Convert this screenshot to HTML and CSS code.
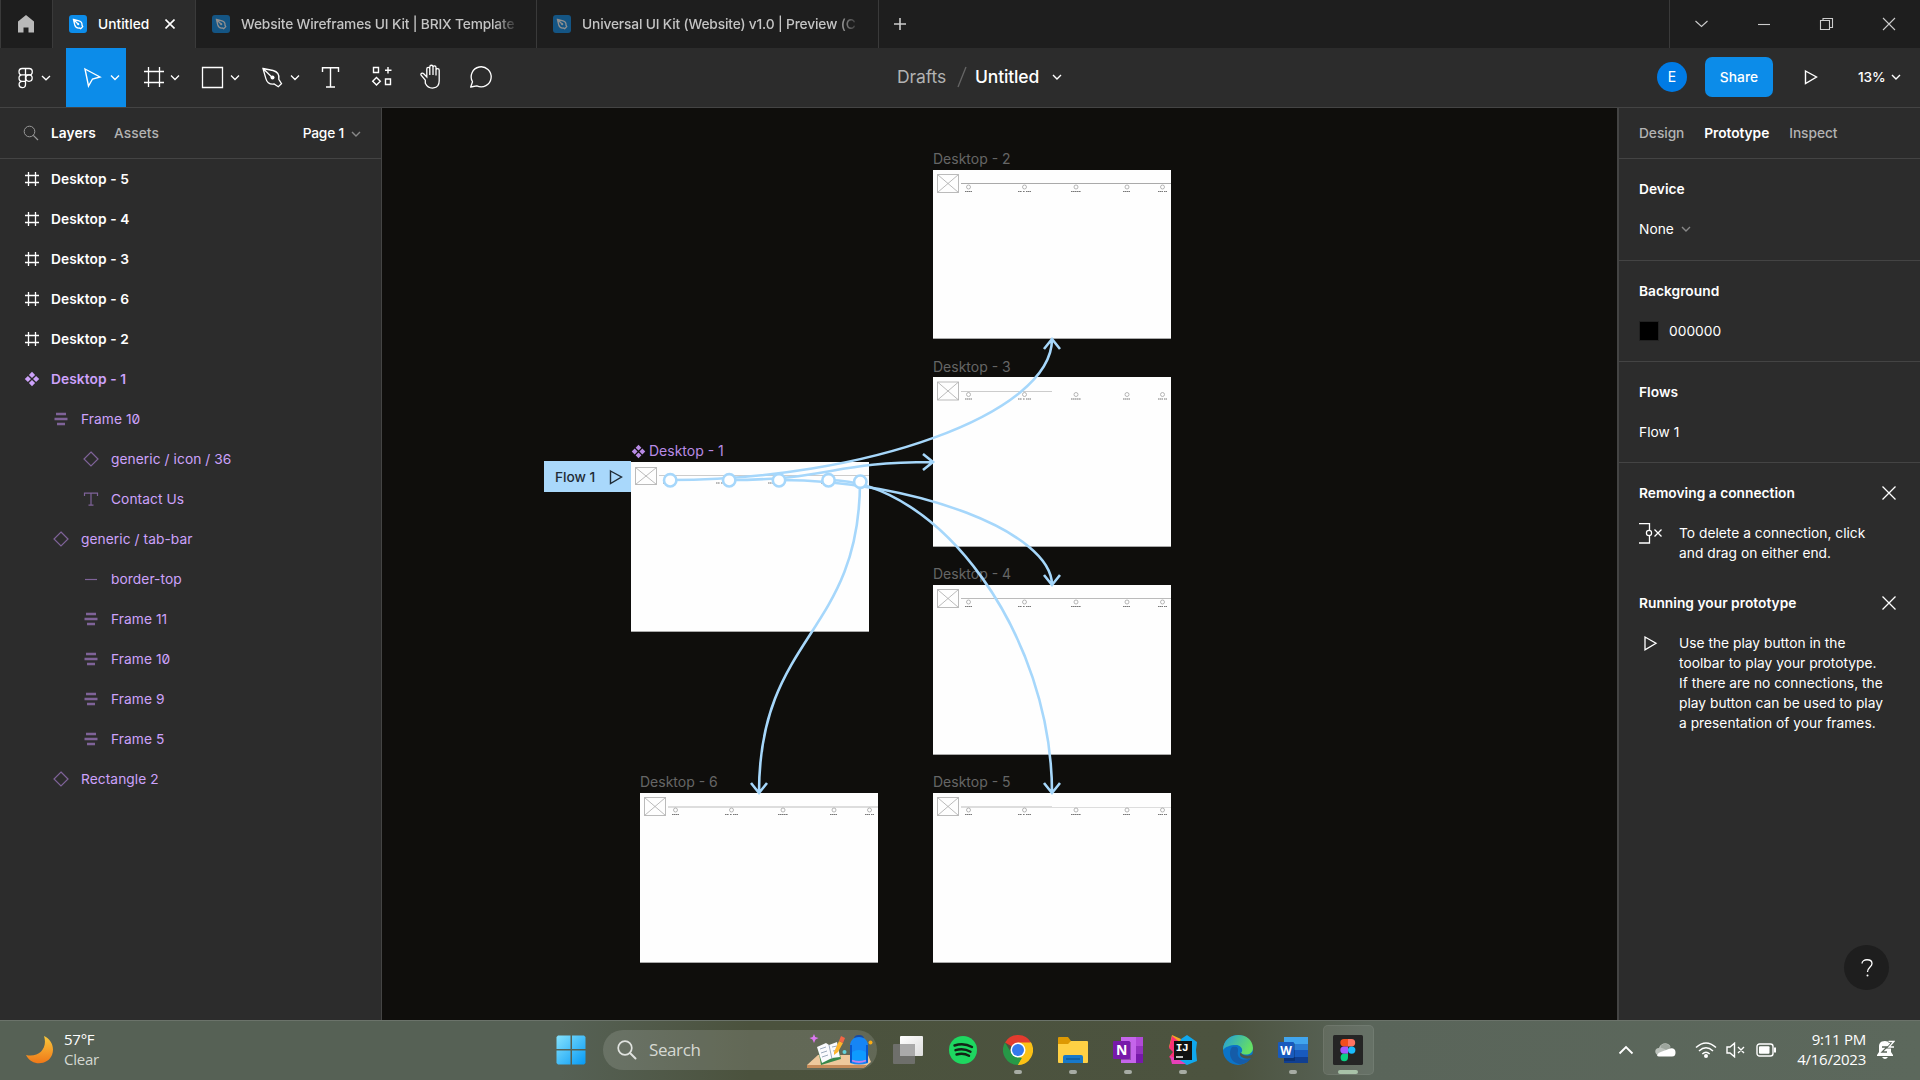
FILE: index.html
```html
<!DOCTYPE html>
<html lang="en">
<head>
<meta charset="utf-8">
<title>Untitled</title>
<link rel="stylesheet" href="styles.css">
</head>
<body>
<svg class="defs" width="0" height="0" aria-hidden="true">
  <symbol id="i-frame" viewBox="0 0 16 16"><path d="M4.500 1v14M11.500 1v14M1 4.500h14M1 11.500h14" fill="none" stroke="currentColor" stroke-width="1.300"/></symbol>
  <symbol id="i-component" viewBox="0 0 16 16"><path d="M8 .8l3.100 3.100L8 7 4.900 3.900zM8 9l3.100 3.100L8 15.200l-3.100-3.100zM3.900 4.900L7 8l-3.100 3.100L.8 8zM12.100 4.900L15.200 8l-3.100 3.100L9 8z" fill="currentColor"/></symbol>
  <symbol id="i-layout" viewBox="0 0 16 16"><path d="M3 3h10M1.500 8h13M4 13h8" fill="none" stroke="currentColor" stroke-width="2.500"/></symbol>
  <symbol id="i-instance" viewBox="0 0 16 16"><path d="M8 1l7 7-7 7-7-7z" fill="none" stroke="currentColor" stroke-width="1.200"/></symbol>
  <symbol id="i-text" viewBox="0 0 16 16"><path d="M1.500 5V2.200h13V5M8 2.200v12M5.500 14.200h5" fill="none" stroke="currentColor" stroke-width="1.200"/></symbol>
  <symbol id="i-line" viewBox="0 0 16 16"><path d="M2 8.500h12" stroke="currentColor" stroke-width="1.200"/></symbol>
  <symbol id="i-chev" viewBox="0 0 10 6"><path d="M1 1l4 4 4-4" fill="none" stroke="currentColor" stroke-width="1.400"/></symbol>
  <symbol id="i-close" viewBox="0 0 14 14"><path d="M.5 .5l13 13M13.500 .5l-13 13" fill="none" stroke="currentColor" stroke-width="1.300"/></symbol>
  <symbol id="i-close-bold" viewBox="0 0 10 10"><path d="M.5 .5l9 9M9.500 .5l-9 9" fill="none" stroke="currentColor" stroke-width="1.600"/></symbol>
  <symbol id="i-play" viewBox="0 0 14 16"><path d="M1.500 2L12.500 8 1.500 14.500z" fill="none" stroke="currentColor" stroke-width="1.400"/></symbol>
  <symbol id="i-file" viewBox="0 0 18 18"><rect width="18" height="18" rx="3" fill="#0c8ce9"/><path d="M4.500 4.500l5.500 1.300c2 .6 3.200 2.200 3 4.300l.7 1.600-2 2-1.600-.7c-2.100.2-3.700-1-4.300-3zM4.500 4.500l4.300 4.300" fill="none" stroke="#fff" stroke-width="1.300"/><circle cx="9.200" cy="9.200" r="1.100" fill="#fff"/></symbol>
  <symbol id="wire" viewBox="0 0 238 30">
    <path d="M4.500 4.500h21v18h-21zM4.500 4.500l21 18M25.500 4.500l-21 18" fill="none" stroke="#aaa" stroke-width=".8"/>
    <g fill="none" stroke="#999" stroke-width=".7"><circle cx="35.500" cy="17" r="2"/><circle cx="91.500" cy="17" r="2"/><circle cx="143" cy="17" r="2"/><circle cx="194" cy="17" r="2"/><circle cx="229.500" cy="17" r="2"/></g>
    <path d="M32 21.500h7M85 21.500h4m1 0h2m1 0h5M138 21.500h10M190 21.500h7M225 21.500h5m1 0h3" fill="none" stroke="#777" stroke-width="1" stroke-dasharray="1.600 .4"/>
  </symbol>
</svg>

<header class="tabs">
  <div class="home"><svg width="18" height="20" viewBox="0 0 18 20"><path d="M9 1l8 6.500V18.500h-5.500v-5h-5v5H1V7.500z" fill="#b9b9b9"/></svg></div>
  <div class="tab active"><svg class="file"><use href="#i-file"/></svg><span>Untitled</span><svg class="x"><use href="#i-close-bold"/></svg></div>
  <div class="tab second"><svg class="file"><use href="#i-file"/></svg><span>Website Wireframes UI Kit | BRIX Template</span></div>
  <div class="tab third"><svg class="file"><use href="#i-file"/></svg><span>Universal UI Kit (Website) v1.0 | Preview (C</span></div>
  <svg class="plus" width="12" height="12" viewBox="0 0 12 12"><path d="M6 0v12M0 6h12" stroke="#ccc" stroke-width="1.600"/></svg>
  <div class="window">
    <svg width="62" height="48" viewBox="0 0 62 48"><path d="M25.500 21l6 5.500 6-5.500"/></svg>
    <svg width="62" height="48" viewBox="0 0 62 48"><path d="M26 24.500h12"/></svg>
    <svg width="63" height="48" viewBox="0 0 63 48"><path d="M26.500 20.500h9v9h-9zM29 20.500v-2h9.500v9h-3"/></svg>
    <svg width="63" height="48" viewBox="0 0 63 48"><path d="M26 18l12 12M38 18L26 30"/></svg>
  </div>
</header>

<nav class="toolbar">
  <div class="tools">
    <svg width="66" height="59" viewBox="0 0 66 59"><g fill="none" stroke="#fff" stroke-width="1.300"><path d="M25.500 20.500h-3.300a3.200 3.200 0 000 6.400h3.300zM25.500 20.500h3.600a3.200 3.200 0 010 6.400h-3.600zM25.500 26.900h-3.300a3.200 3.200 0 000 6.400h3.300zM25.500 33.300h-3.300a3.200 3.200 0 103.300 3.200z"/><circle cx="29" cy="30.100" r="3.200"/><path d="M42 28l4 3.800 4-3.800"/></g></svg>
    <svg class="on" width="60" height="59" viewBox="0 0 60 59"><g fill="none" stroke="#fff" stroke-width="1.400"><path d="M19 21l15 8-7.500 2-4 7z"/><path d="M45 27.500l4 4 4-4"/></g></svg>
    <svg width="60" height="59" viewBox="0 0 60 59"><g fill="none" stroke="#fff" stroke-width="1.300"><path d="M22.500 19v20M33.500 19v20M18 23.500h20M18 34.500h20M45 27.500l4 4 4-4"/></g></svg>
    <svg width="60" height="59" viewBox="0 0 60 59"><g fill="none" stroke="#fff" stroke-width="1.300"><path d="M16.500 19.500h20v20h-20zM45 27.500l4 4 4-4"/></g></svg>
    <svg width="60" height="59" viewBox="0 0 60 59"><g fill="none" stroke="#fff" stroke-width="1.300"><path d="M17 20.500l10 2c4.500 1.200 6.500 4.500 5.800 8.800l2.700 4.400-3.200 3-4.200-2.700c-4.200.5-7.200-1.500-8.300-5.700zM17 20.500l9.300 9M45 27.500l4 4 4-4"/></g><circle cx="26.500" cy="29.500" r="2" fill="#fff"/></svg>
    <svg width="50" height="59" viewBox="0 0 50 59"><path d="M16.500 24v-4.300h16V24M24.500 19.700v19.300M20 39h9" fill="none" stroke="#fff" stroke-width="1.400"/></svg>
    <svg width="50" height="59" viewBox="0 0 50 59"><path d="M17.500 19.500h5v5h-5zM29.500 31h5v5.500h-5zM32 19v6.500M29 22.200h6.500M20.500 29.500l3.800 3.800-3.800 3.800-3.800-3.800z" fill="none" stroke="#fff" stroke-width="1.400"/></svg>
    <svg width="50" height="59" viewBox="0 0 50 59"><path d="M18.500 33.500l-4.200-5c-.9-1.500 1.200-2.800 2.600-1.500l3.100 3.200v-8c0-2 3-2 3 0v6-8c0-2.200 3.200-2.200 3.200 0v8-7.500c0-2 3-2 3 0v8-5.200c0-2 3.200-2 3.200 0V34c0 9-10.500 9.500-13.900 2.500z" transform="translate(.8 -1.300)" fill="none" stroke="#fff" stroke-width="1.300"/></svg>
    <svg width="50" height="59" viewBox="0 0 50 59"><path d="M14 39l1.800-5.200a10 10 0 114.300 4z" transform="translate(.7 0)" fill="none" stroke="#fff" stroke-width="1.300" stroke-linejoin="round"/></svg>
  </div>
  <div class="doc"><span class="drafts">Drafts</span><svg width="10" height="22" viewBox="0 0 10 22"><path d="M9 1L1 21" stroke="#666" stroke-width="1.300"/></svg><span class="name">Untitled</span><svg class="chev"><use href="#i-chev"/></svg></div>
  <div class="actions">
    <span class="avatar">E</span><span class="share">Share</span><svg class="play"><use href="#i-play"/></svg><span class="pct">13%</span><svg class="chev"><use href="#i-chev"/></svg>
  </div>
</nav>

<main>
  <aside class="left">
    <div class="head"><svg width="16" height="16" viewBox="0 0 16 16"><circle cx="6.500" cy="6.500" r="5.300" fill="none" stroke="#999"/><path d="M10.300 10.300l4.700 4.700" stroke="#999" stroke-width="1.200"/></svg><b>Layers</b><span class="dim">Assets</span><span class="page">Page 1</span><svg class="chev"><use href="#i-chev"/></svg></div>
    <ul>
      <li class="top"><svg><use href="#i-frame"/></svg>Desktop - 5</li>
      <li class="top"><svg><use href="#i-frame"/></svg>Desktop - 4</li>
      <li class="top"><svg><use href="#i-frame"/></svg>Desktop - 3</li>
      <li class="top"><svg><use href="#i-frame"/></svg>Desktop - 6</li>
      <li class="top"><svg><use href="#i-frame"/></svg>Desktop - 2</li>
      <li class="top comp"><svg><use href="#i-component"/></svg>Desktop - 1</li>
      <li class="sub zero"><svg><use href="#i-layout"/></svg>Frame 10</li>
      <li class="sub deep"><svg><use href="#i-instance"/></svg>generic / icon / 36</li>
      <li class="sub deep"><svg><use href="#i-text"/></svg>Contact Us</li>
      <li class="sub"><svg><use href="#i-instance"/></svg>generic / tab-bar</li>
      <li class="sub deep"><svg><use href="#i-line"/></svg>border-top</li>
      <li class="sub deep"><svg><use href="#i-layout"/></svg>Frame 11</li>
      <li class="sub deep zero"><svg><use href="#i-layout"/></svg>Frame 10</li>
      <li class="sub deep"><svg><use href="#i-layout"/></svg>Frame 9</li>
      <li class="sub deep"><svg><use href="#i-layout"/></svg>Frame 5</li>
      <li class="sub"><svg><use href="#i-instance"/></svg>Rectangle 2</li>
    </ul>
  </aside>

  <section class="canvas">
    <div class="frame d2"><span>Desktop - 2</span><svg><path d="M28 13.500h210" stroke="#aaa"/><use href="#wire"/></svg></div>
    <div class="frame d3"><span>Desktop - 3</span><svg><path d="M28 14.500h91" stroke="#ccc"/><use href="#wire" y=".5"/></svg></div>
    <div class="frame d4"><span>Desktop - 4</span><svg><path d="M28 13.500h210" stroke="#bbb"/><use href="#wire"/></svg></div>
    <div class="frame d5"><span>Desktop - 5</span><svg><path d="M28 14h91" stroke="#ddd" stroke-width="2"/><path d="M119 14.500h119" stroke="#ddd"/><use href="#wire"/></svg></div>
    <div class="frame d6"><span>Desktop - 6</span><svg><path d="M28 14h210" stroke="#ddd" stroke-width="2"/><use href="#wire"/></svg></div>
    <div class="frame d1"><span><svg class="mark"><use href="#i-component"/></svg>Desktop - 1</span><svg><path d="M28 13.500h210" stroke="#ccc"/><path d="M4.500 5.500h21v17h-21zM4.500 5.500l21 17M25.500 5.500l-21 17" fill="none" stroke="#aaa" stroke-width=".8"/><path d="M85 21h4m1 0h4M137 21h5M190 21h4M32 21h3" stroke="#777" stroke-dasharray="1.600 .4"/></svg></div>
    <div class="flow">Flow 1<svg><use href="#i-play"/></svg></div>
    <svg class="links" viewBox="382 108 1235 912">
      <g fill="none" stroke="#a6d7fb" stroke-width="2.600">
        <path d="M670 480C865 480 1052 414 1052 339M1044 349l8-10 8 10"/>
        <path d="M729 480C831 480 831 462 933 462M923 454l10 8-10 8"/>
        <path d="M779 480C915.500 480 1052 532.500 1052 585M1044 575l8 10 8-10"/>
        <path d="M828 480C940 480 1052 636 1052 793M1044 783l8 10 8-10"/>
        <path d="M860 481C860 635 759 635 759 793M751 783l8 10 8-10"/>
      </g>
      <g fill="#fff" stroke="#a6d7fb" stroke-width="2.600"><circle cx="670.200" cy="480.300" r="6.200"/><circle cx="729.200" cy="480.300" r="6.200"/><circle cx="779" cy="480.300" r="6.200"/><circle cx="828.500" cy="480.300" r="6.200"/><circle cx="860.300" cy="481.700" r="6.200"/></g>
    </svg>
  </section>

  <aside class="right">
    <div class="head"><span class="dim">Design</span><b>Prototype</b><span class="dim">Inspect</span></div>
    <section><h2>Device</h2><p>None<svg class="chev"><use href="#i-chev"/></svg></p></section>
    <section><h2>Background</h2><p><i class="swatch"></i>000000</p></section>
    <section><h2>Flows</h2><p>Flow 1</p></section>
    <div class="tip"><h2>Removing a connection<svg><use href="#i-close"/></svg></h2>
      <div class="row"><svg width="24" height="24" viewBox="0 0 24 24"><path d="M0 .5h10.500v7M10.500 13v7H0M15.500 6.500l7 7M22.500 6.500l-7 7" fill="none" stroke="#fff" stroke-width="1.300"/><circle cx="10" cy="10" r="2.600" fill="none" stroke="#fff" stroke-width="1.200"/></svg><p>To delete a connection, click<br>and drag on either end.</p></div></div>
    <div class="tip"><h2>Running your prototype<svg><use href="#i-close"/></svg></h2>
      <div class="row"><svg width="24" height="24" viewBox="0 0 24 24"><path d="M6 4l11 6.300-11 6.500z" fill="none" stroke="#fff" stroke-width="1.300"/></svg><p>Use the play button in the<br>toolbar to play your prototype.<br>If there are no connections, the<br>play button can be used to play<br>a presentation of your frames.</p></div></div>
    <div class="help"><svg width="14" height="20" viewBox="0 0 14 20"><path d="M2 5.500C2 .5 12 .5 12 5.500c0 3.500-4.500 3.500-4.500 8.500" fill="none" stroke="#fff" stroke-width="1.300"/><circle cx="7.500" cy="17.500" r="1" fill="#fff"/></svg></div>
  </aside>
</main>

<footer>
  <div class="weather">
    <svg width="30" height="30" viewBox="0 0 30 30"><defs><linearGradient id="moon" x1="0" y1="0" x2="0" y2="1"><stop offset="0" stop-color="#f8c83c"/><stop offset="1" stop-color="#f07818"/></linearGradient></defs><path d="M19 1c7 3 11 11 8 19-4 10-20 12-26 0 13 3 22-7 18-19z" fill="url(#moon)"/></svg>
    <p>57°F<br><span>Clear</span></p>
  </div>
  <div class="apps">
    <svg class="start" width="30" height="30" viewBox="0 0 30 30"><defs><linearGradient id="win" x1="0" y1="0" x2="1" y2="1"><stop offset="0" stop-color="#86e2fc"/><stop offset="1" stop-color="#069af5"/></linearGradient></defs><path d="M2 .5h12.500V14H.5V2zM16 .5h12l1.500 1.500v12H16zM.5 15.500h14v14H2L.5 28zM16 15.500h13.500V28L28 29.500H16z" fill="url(#win)"/></svg>
    <div class="search">
      <svg width="20" height="20" viewBox="0 0 20 20"><circle cx="8" cy="8" r="6.800" fill="none" stroke="#e0e3df" stroke-width="1.700"/><path d="M13 13l5.500 5.500" stroke="#e0e3df" stroke-width="2" stroke-linecap="round"/></svg>
      <span>Search</span>
      <svg class="art" width="68" height="40" viewBox="0 0 68 40"><path d="M0 35L11 25h50l3 7-6 5H0z" fill="#eec89c"/><path d="M0 35h60l-3 3H0z" fill="#c58b59"/><path d="M11 18l20-2 3 13-20 6z" fill="#36874b"/><path d="M10 17l9-4 3 2 8-3 3 15-8 1-10 5z" fill="#fafafd"/><path d="M22 15l3 14M13 19l6-2M14 23l6-2M15 27l6-2M25 17l5-1M26 21l5-1" stroke="#9caabd" fill="none"/><path d="M27 22L32 11l4 2-5 9-4 3z" fill="#fdb42c"/><path d="M32 11l2-5 4 2-2 5z" fill="#f26545"/><path d="M7 4l1.200 3 3.300 1-3 1.500L7 13l-1.500-3.500L2.500 8l3.200-1z" fill="#db78f0"/><path d="M47 9q0-4 5-4t5 4z" fill="#1749a1"/><path d="M43 16c0-5 3-9 9-9s9 4 9 9v17q-9 3-18 0z" fill="#1685f5"/><path d="M44 26q0-6 8-6t8 6v6H44z" fill="#0e9bff"/><path d="M43 15h2v18l-2-1zM59 15h2v17l-2 1z" fill="#0757ce"/><path d="M45 30.500q7 3 14 0" stroke="#bd81ed" stroke-width="1.800" fill="none"/><circle cx="37.500" cy="22" r="2" fill="#63d3dc"/><circle cx="63.500" cy="12.500" r="2" fill="#f9ac14"/></svg>
    </div>
    <div class="app"><svg viewBox="0 0 30 30"><defs><linearGradient id="tv" x1="0" y1="0" x2="1" y2="1"><stop offset="0" stop-color="#fff"/><stop offset="1" stop-color="#ddd"/></linearGradient></defs><rect x="7" y="1" width="23" height="20" rx="1" fill="url(#tv)"/><rect y="9" width="22" height="20" rx="1" fill="#777" fill-opacity=".8"/><path d="M7 9h15v12H7z" fill="#aaa"/></svg></div>
    <div class="app"><svg viewBox="0 0 30 30"><circle cx="15" cy="15" r="14" fill="#1ed760"/><path d="M6.500 10.500q9.500-3 17.500 1.500M7.500 15.200q8-2.500 15 1.500M8.500 19.500q7-2 12.500 1.300" fill="none" stroke="#122416" stroke-width="2.400" stroke-linecap="round"/></svg></div>
    <div class="app run"><svg viewBox="0 0 30 30"><path d="M15 15L2.010 7.500A15 15 0 0128 7.500z" fill="#e33b2e"/><path d="M15 15l13-7.500A15 15 0 0115 30z" fill="#fbc116"/><path d="M15 30A15 15 0 012 7.500L9 19l6 3 4 1z" fill="#279847"/><path d="M15 7.500h13q4 12-7 21.200L15 30l6.500-11z" fill="#fbc116"/><circle cx="15" cy="15" r="7.500" fill="#fff"/><circle cx="15" cy="15" r="6" fill="#3479ed"/></svg></div>
    <div class="app run"><svg viewBox="0 0 30 30"><path d="M0 3q0-1 1-1h9l3 4v4H0z" fill="#dd9903"/><path d="M0 9h10l3-3h16q1 0 1 1v20q0 1-1 1H1q-1 0-1-1z" fill="#ffd044"/><path d="M5 28v-6q0-2 2-2h16q2 0 2 2v6z" fill="#1879c9"/><path d="M8 24h14" stroke="#0b5392" stroke-width="1.200"/></svg></div>
    <div class="app run"><svg viewBox="0 0 30 30"><path d="M8 2h22v26H8z" fill="#c565eb"/><path d="M23 2h7v9h-7z" fill="#b14ad8"/><path d="M23 11h7v8h-7z" fill="#9332bf"/><path d="M23 19h7v9h-7z" fill="#7719aa"/><path d="M8 7h10v18H8z" fill="#000" opacity=".25"/><rect y="6" width="17" height="18" rx="1" fill="#7719aa"/><text x="8.500" y="20" text-anchor="middle" class="glyph">N</text></svg></div>
    <div class="app run"><svg viewBox="0 0 30 30"><path d="M4 0l9 4-5 22-4-3 2-7-5-4z" fill="#f5a623"/><path d="M4 1l10 8-6 18-7-5 4-5-4-4z" fill="#fb3174"/><path d="M13 4l6-4 10 7-1 8 1 11-10 4-11-5z" fill="#10a8ee"/><path d="M2 21l8 3 8 5-14 0z" fill="#e640b8"/><path d="M6 6h18v19H6z" fill="#111"/><text x="14" y="16" text-anchor="middle" class="ij">IJ</text><path d="M8 22h7" stroke="#fff" stroke-width="1.500"/></svg></div>
    <div class="app"><svg viewBox="0 0 30 30"><defs><linearGradient id="edge" x1="0" y1="0" x2="1" y2=".4"><stop stop-color="#239ddc"/><stop offset="1" stop-color="#65df64"/></linearGradient></defs><circle cx="15" cy="15" r="15" fill="#0b74c8"/><path d="M0 15C0-4 29-5 30 13c0 7-8 8-12 5 3-3 0-8-5-8-6 0-11 2-13 5z" fill="url(#edge)"/><path d="M9 12c-5 7 0 18 10 17 5-1 8-4 9-6-8 4-15 0-13-7 0-3 0-5-6-4z" fill="#155ca8"/><path d="M17.500 17.500c3 4 9 4 12.500 1.500l1 3-3 1c-6 2-13-1-10.500-5.500z" fill="#4a544b"/></svg></div>
    <div class="app run"><svg viewBox="0 0 30 30"><path d="M6 2h24v7H6z" fill="#41a5ee"/><path d="M6 9h24v6H6z" fill="#2b7cd3"/><path d="M6 15h24v7H6z" fill="#185abd"/><path d="M6 22h24v6H6z" fill="#103f91"/><path d="M6 8h11v18H6z" fill="#000" opacity=".2"/><rect y="7" width="16" height="16" rx="1" fill="#185abd"/><text x="8" y="19.500" text-anchor="middle" class="glyph w">W</text></svg></div>
    <div class="app run current"><svg viewBox="0 0 30 30"><rect width="30" height="30" rx="1.500" fill="#252525"/><path d="M15 4h-4a3.700 3.700 0 000 7.400h4z" fill="#f24e1e"/><path d="M15 4h3.500a3.700 3.700 0 010 7.400H15z" fill="#ff7262"/><path d="M15 11.400h-4a3.700 3.700 0 000 7.400h4z" fill="#a259ff"/><circle cx="18.700" cy="15.100" r="3.700" fill="#1abcfe"/><path d="M15 18.800h-4a3.700 3.700 0 104 3.700z" fill="#0acf83"/></svg></div>
  </div>
  <div class="tray">
    <svg width="16" height="10" viewBox="0 0 16 10"><path d="M1.500 8.500L8 2l6.500 6.500" fill="none" stroke="#fff" stroke-width="1.800"/></svg>
    <svg class="cloud" width="21" height="14" viewBox="0 0 21 14"><path d="M4 12.500C-1 11.500-1 5 4 5c2-6 10-6 11.500-1z" fill="#bbc1bb"/><path d="M6 2.500q5-4 9.500 1.500l-2 4-4-2-4-1.500z" fill="#9da59d"/><path d="M2 12.500q1-3 5-4l8-3q5-1 5.500 3.500.3 4.500-3.500 4.500H4q-1.500 0-2-1z" fill="#fff"/></svg>
    <svg class="wifi" width="22" height="18" viewBox="0 0 22 18"><g fill="none" stroke="#fff" stroke-width="1.500"><path d="M1 6.500q10-9 20 0M4 10q7-6.500 14 0M7.300 13q3.700-3.500 7.400 0"/></g><circle cx="11" cy="15" r="2" fill="#fff"/></svg>
    <svg class="sound" width="20" height="16" viewBox="0 0 20 16"><path d="M1 5h3l4.500-3.800v13.600L4 11H1zM12 5l6 6M18 5l-6 6" fill="none" stroke="#fff" stroke-width="1.400"/></svg>
    <svg class="battery" width="21" height="14" viewBox="0 0 21 14"><rect x="1" y="1" width="16" height="12" rx="2.500" fill="none" stroke="#fff" stroke-width="1.400"/><rect x="3" y="3.300" width="10.500" height="7.400" rx="1" fill="#fff"/><path d="M19 4.500v5" stroke="#fff" stroke-width="2"/></svg>
    <p>9:11 PM<br>4/16/2023</p>
    <svg class="bell" width="18" height="20" viewBox="0 0 18 20"><path d="M8 1C3 1 2 4 2 7v5l-2 3v1h16v-1l-2-3V7q0-6-6-6zM5 17h6q-3 4-6 0z" fill="#fff"/><path d="M5 7h5l-5 5h5" fill="none" stroke="#5c675c" stroke-width="1.300"/><path d="M11.500 1.500h5.500l-5 5.500h5" fill="none" stroke="#5c675c" stroke-width="3"/><path d="M11.500 1.500h5.500l-5 5.500h5" fill="none" stroke="#fff" stroke-width="1.300"/></svg>
  </div>
</footer>
</body>
</html>
```

FILE: styles.css
```css
* { box-sizing: border-box; }
body {
  margin: 0;
  width: 1920px;
  height: 1080px;
  overflow: hidden;
  display: flex;
  flex-direction: column;
  background: #2c2c2c;
  color: #fff;
  font: 400 13.75px/20px Inter, "Liberation Sans", sans-serif;
  letter-spacing: .07px;
}
svg { display: block; flex: none; }
.defs { position: absolute; }
h2, p, ul { margin: 0; padding: 0; font-size: inherit; }
b, h2 { font-weight: 600; }
.dim { color: #b3b3b3; font-weight: 500; }
.chev { width: 10px; height: 6px; }

/* Title bar */
.tabs { height: 48px; flex: none; display: flex; align-items: center; background: #1e1e1e; }
.home { width: 53px; height: 48px; display: flex; align-items: center; padding-left: 16px; border-right: 1px solid #3a3a3a; border-left: 1px solid #3a3a3a; }
.tab { height: 48px; display: flex; align-items: center; padding-left: 16px; border-right: 1px solid #3a3a3a; color: #c4c4c4; font-weight: 500; font-size: 13.75px; letter-spacing: -.16px; }
.tab .file { width: 18px; height: 18px; margin-right: 11px; }
.tab .x { width: 10px; height: 10px; margin-left: 16px; }
.active { width: 143px; background: #2c2c2c; color: #fff; letter-spacing: 0; }
.second { width: 341px; }
.third { width: 342px; }
.second .file, .third .file { opacity: .5; }
.second span, .third span { width: 282px; white-space: nowrap; mask-image: linear-gradient(90deg, #000 254px, transparent 278px); }
.plus { margin-left: 15px; }
.window { margin-left: auto; display: flex; border-left: 1px solid #3a3a3a; }
.window svg { fill: none; stroke: #ccc; stroke-width: 1.1; }

/* Toolbar */
.toolbar { height: 60px; flex: none; display: flex; border-bottom: 1px solid #444; }
.tools { display: flex; width: 897px; }
.on { background: #0c8ce9; }
.doc { display: flex; align-items: center; width: 760px; padding-bottom: 2px; font-size: 17.5px; letter-spacing: -.1px; }
.drafts { width: 60px; color: #b3b3b3; }
.doc .name { margin-left: 8px; width: 77px; font-weight: 500; letter-spacing: -.16px; }
.actions { display: flex; align-items: center; padding-bottom: 1px; }
.avatar { width: 30px; height: 30px; border-radius: 50%; background: #007be5; line-height: 30px; text-align: center; font-size: 14px; }
.share { width: 68px; height: 40px; margin-left: 18px; border-radius: 7px; background: #0c8ce9; line-height: 40px; text-align: center; font-weight: 500; }
.actions .play { width: 14px; height: 16px; margin-left: 31px; }
.pct { width: 33px; margin-left: 40px; font-weight: 500; letter-spacing: -.2px; }

/* Panels */
main { height: 912px; flex: none; display: flex; }
.left { width: 382px; border-right: 1px solid #444; }
.head { height: 51px; display: flex; align-items: center; border-bottom: 1px solid #444; }
.left .head { padding-left: 23px; }
.left .head b { margin-left: 12px; width: 63px; }
.page { margin-left: auto; font-weight: 500; letter-spacing: -.2px; }
.left .head .chev { margin: 2px 20px 0 7px; color: #888; }
ul { list-style: none; }
li { height: 40px; display: flex; align-items: center; }
li svg { width: 16px; height: 16px; margin-right: 12px; }
.top { padding-left: 24px; font-weight: 600; }
.top svg { margin-right: 11px; }
.comp { color: #cda2fb; }
.sub { padding-left: 53px; color: #cda2fb; }
.sub svg { color: #7f6399; }
.deep { padding-left: 83px; }
.zero { font-feature-settings: "zero"; }

.right { width: 303px; border-left: 2px solid #444; position: relative; letter-spacing: .02px; }
.right .head { padding-left: 20px; gap: 20px; letter-spacing: -.06px; }
.right section { height: 101px; padding: 20px 20px 0; border-bottom: 1px solid #444; }
.right section:nth-of-type(1) { height: 102px; }
.right section p { display: flex; align-items: center; margin-top: 20px; }
.right section .chev { margin-left: 7px; color: #888; }
.swatch { width: 20px; height: 20px; background: #000; border: 1px solid #222; margin-right: 10px; }
.tip { padding: 20px 20px 10px; }
.tip h2 { display: flex; align-items: center; justify-content: space-between; }
.tip h2 svg { width: 14px; height: 14px; margin-right: 4px; }
.row { display: flex; gap: 16px; margin-top: 20px; }
.help { position: absolute; left: 225px; top: 837px; width: 45px; height: 45px; border-radius: 50%; background: #1e1e1e; display: flex; align-items: center; justify-content: center; }

/* Canvas: frames are free-placed objects */
.canvas { width: 1235px; position: relative; background: #0f0e0c; }
.frame { position: absolute; width: 238px; height: 170px; background: #fefefe; border-bottom: 1px solid #aaa; }
.frame > svg { width: 238px; height: 30px; }
.frame use { width: 238px; height: 30px; }
.frame span { position: absolute; left: 0; top: -21px; color: #666; white-space: nowrap; font-size: 14px; letter-spacing: 0; display: flex; align-items: center; }
.frame .mark { width: 15px; height: 15px; margin-right: 3px; }
.frame .mark use { width: 15px; height: 15px; }
.d2 { left: 551px; top: 62px; height: 169px; }
.d3 { left: 551px; top: 269px; }
.frame.d3 span { top: -20px; }
.d4 { left: 551px; top: 477px; }
.d5 { left: 551px; top: 685px; }
.d6 { left: 258px; top: 685px; }
.d1 { left: 249px; top: 354px; }
.d1 span { color: #b98be6; }
.flow { position: absolute; left: 162px; top: 353px; width: 87px; height: 31px; padding-left: 11px; background: #a9d8fb; color: #1f2b35; font-weight: 500; letter-spacing: -.05px; display: flex; align-items: center; }
.flow svg { width: 14px; height: 16px; margin-left: 14px; }
.links { position: absolute; left: 0; top: 0; width: 1235px; height: 912px; }

/* Taskbar */
footer { height: 60px; flex: none; display: flex; align-items: center; padding-bottom: 1px; border-top: 1px solid #6b736a; background: linear-gradient(90deg, #566155 0, #566155 560px, #4b523d 750px, #4c533f 1230px, #5a655a 1370px, #5c685c 100%); font: 15px/20px "Open Sans", "Noto Sans", sans-serif; letter-spacing: -.25px; }
.weather { width: 556px; display: flex; align-items: center; padding-left: 25px; gap: 9px; }
.weather p, .tray p { padding-bottom: 3px; }
.weather span { color: #d4d8d2; }
.apps { display: flex; align-items: center; }
.search { width: 274px; height: 40px; margin: 0 6px 0 17px; padding-left: 14px; border-radius: 20px; background: rgba(255, 255, 255, .13); display: flex; align-items: center; font-size: 17px; color: #d6d9d3; }
.search span { margin-left: 12px; letter-spacing: -.4px; }
.art { margin-left: auto; margin-right: 2px; }
.app { width: 51px; height: 50px; margin-right: 4px; padding: 10px 10px 0; position: relative; }
.app svg { width: 30px; height: 30px; }
.run::after { content: ""; position: absolute; left: 21px; top: 45px; width: 8px; height: 4px; border-radius: 2px; background: #a7aca4; }
.current { background: rgba(255, 255, 255, .08); border-radius: 5px; box-shadow: inset 0 0 0 1px rgba(255, 255, 255, .07); }
.current::after { left: 15px; width: 20px; background: #a8c2a8; }
.glyph { font: 700 14px "Open Sans", sans-serif; fill: #fff; }
.w { font-size: 12px; }
.ij { font: 700 11px "Liberation Mono", monospace; fill: #fff; }
.tray { margin-left: auto; display: flex; align-items: center; padding-right: 25px; }
.cloud { margin-left: 21px; }
.wifi { margin-left: 19px; }
.sound { margin-left: 9px; }
.battery { margin-left: 10px; }
.tray p { width: 89px; text-align: right; }
.bell { margin-left: 11px; }
```
